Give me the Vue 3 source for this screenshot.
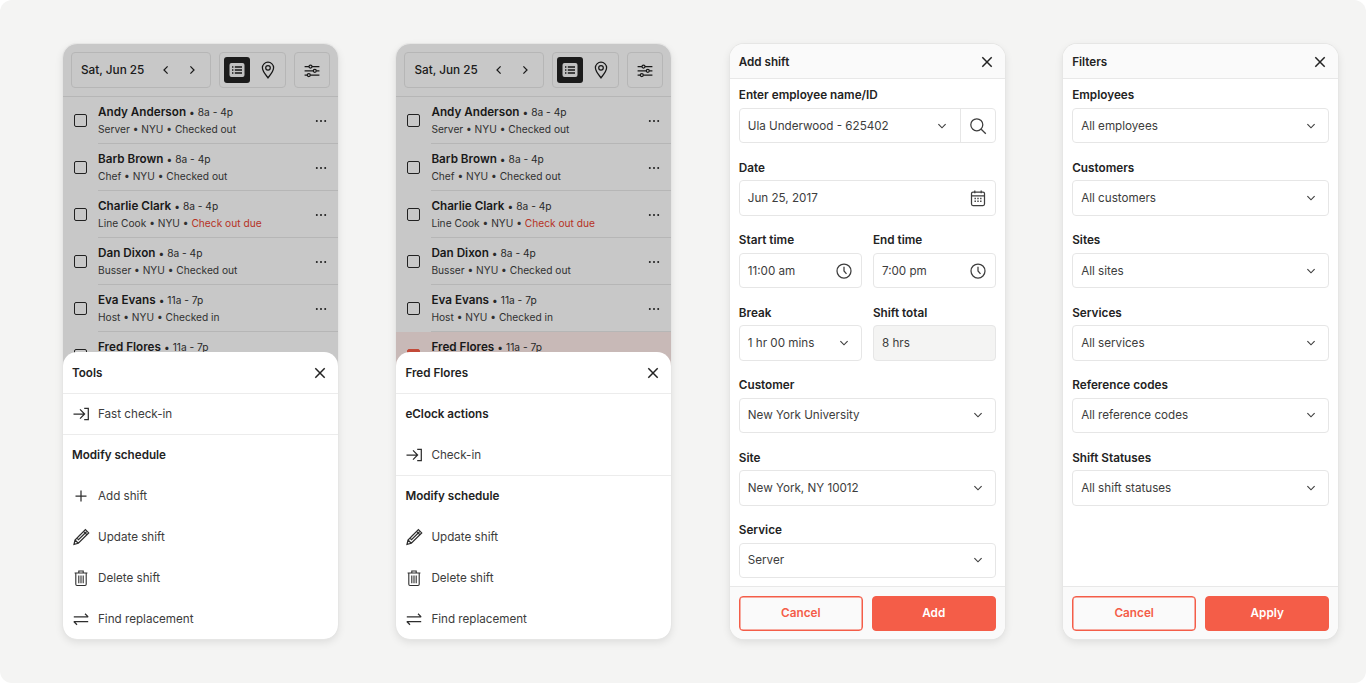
<script setup>
const rows = [
  { name: 'Andy Anderson', time: '8a - 4p', role: 'Server', status: 'Checked out' },
  { name: 'Barb Brown', time: '8a - 4p', role: 'Chef', status: 'Checked out' },
  { name: 'Charlie Clark', time: '8a - 4p', role: 'Line Cook', status: 'Check out due', due: true },
  { name: 'Dan Dixon', time: '8a - 4p', role: 'Busser', status: 'Checked out' },
  { name: 'Eva Evans', time: '11a - 7p', role: 'Host', status: 'Checked in' },
  { name: 'Fred Flores', time: '11a - 7p', last: true }
]
const phones = [
  {
    title: 'Tools',
    selected: false,
    sections: [
      { items: [{ icon: 'in', label: 'Fast check-in' }] },
      { heading: 'Modify schedule', items: [
        { icon: 'plus', label: 'Add shift' },
        { icon: 'pen', label: 'Update shift' },
        { icon: 'trash', label: 'Delete shift' },
        { icon: 'swap', label: 'Find replacement' }
      ] }
    ]
  },
  {
    title: 'Fred Flores',
    selected: true,
    sections: [
      { heading: 'eClock actions', items: [{ icon: 'in', label: 'Check-in' }] },
      { heading: 'Modify schedule', items: [
        { icon: 'pen', label: 'Update shift' },
        { icon: 'trash', label: 'Delete shift' },
        { icon: 'swap', label: 'Find replacement' }
      ] }
    ]
  }
]
const filters = [
  ['Employees', 'All employees'],
  ['Customers', 'All customers'],
  ['Sites', 'All sites'],
  ['Services', 'All services'],
  ['Reference codes', 'All reference codes'],
  ['Shift Statuses', 'All shift statuses']
]
const selects = [
  ['Customer', 'New York University'],
  ['Site', 'New York, NY 10012'],
  ['Service', 'Server']
]
</script>

<template>
  <div class="page">
    <section v-for="p in phones" :key="p.title" class="card">
      <header class="toolbar">
        <div class="box datebox">
          <span class="date">Sat, Jun 25</span>
          <svg class="ic16" viewBox="0 0 16 16"><path d="M9.6 4.4 6 8l3.6 3.6" /></svg>
          <svg class="ic16" viewBox="0 0 16 16"><path d="M6.4 4.4 10 8l-3.6 3.6" /></svg>
        </div>
        <div class="box viewbox">
          <span class="viewon">
            <svg class="listic" viewBox="0 0 16 16">
              <rect x="0.5" y="1" width="15" height="14" rx="2" fill="#f2f2f2" stroke="none" />
              <path d="M3 5h1.4M3 8h1.4M3 11h1.4M5.800 5H13M5.800 8H13M5.800 11H13" stroke="#1c1c1c" stroke-width="1.4" />
            </svg>
          </span>
          <svg class="ic20" viewBox="0 0 20 20">
            <path d="M10 17.800c-1-1.500-5.600-6.100-5.600-10a5.600 5.600 0 0 1 11.200 0c0 3.900-4.600 8.500-5.600 10Z" />
            <circle cx="10" cy="7.800" r="2.300" />
          </svg>
        </div>
        <div class="box slidebox">
          <svg class="ic20" viewBox="0 0 20 20">
            <path d="M2.600 6.500h4.400M10 6.500h7.400M2.600 10.800h8.700M14.300 10.800h3.100M2.600 15h2.700M8.300 15h9.100" />
            <circle cx="8.500" cy="6.500" r="1.500" /><circle cx="12.800" cy="10.800" r="1.500" /><circle cx="6.800" cy="15" r="1.500" />
          </svg>
        </div>
      </header>
      <div class="list">
        <div v-for="r in rows" :key="r.name" class="row" :class="{ tinted: r.last && p.selected }">
          <span class="check" :class="{ checked: r.last && p.selected }"></span>
          <div class="rowtext">
            <div class="line1"><b>{{ r.name }}</b><span class="dot">•</span>{{ r.time }}</div>
            <div v-if="!r.last" class="line2">{{ r.role }} • NYU • <span :class="{ due: r.due }">{{ r.status }}</span></div>
          </div>
          <svg v-if="!r.last" class="more" viewBox="0 0 16 16"><circle cx="3.800" cy="8" r="1" /><circle cx="8" cy="8" r="1" /><circle cx="12.200" cy="8" r="1" /></svg>
        </div>
      </div>
      <div class="scrim"></div>
      <div class="sheet">
        <div class="sheethead">
          <span>{{ p.title }}</span>
          <svg class="ic16 close" viewBox="0 0 16 16"><path d="m3.300 3.300 9.400 9.400M12.700 3.300l-9.400 9.400" /></svg>
        </div>
        <div v-for="(s, i) in p.sections" :key="i" class="group">
          <div v-if="s.heading" class="grouphead">{{ s.heading }}</div>
          <div v-for="it in s.items" :key="it.label" class="action">
            <svg class="ic20 actic" viewBox="0 0 20 20">
              <template v-if="it.icon === 'in'">
                <path d="M2.500 10h10.600M9 5.400l4.600 4.600L9 14.600M13.200 4.300h4.100v11.400h-4.100" />
              </template>
              <path v-else-if="it.icon === 'plus'" d="M10 4.500v11M4.500 10h11" />
              <template v-else-if="it.icon === 'pen'">
                <path d="M3 17.300l1-4.300L14.400 2.600l3.300 3.300L7.300 16.300 3 17.300ZM4 13l3.300 3.300M12.600 4.400l3.300 3.300M5.900 11.100 7.500 12.700l8-8M9 8l-3.100 3.100" />
              </template>
              <template v-else-if="it.icon === 'trash'">
                <path d="M3.600 5h12.800M7.800 5V3h4.400v2M4.800 5v11.300c0 .800.500 1.200 1.200 1.200h8c.700 0 1.200-.400 1.200-1.200V5M7.800 7.500v7.800M10 7.500v7.800M12.200 7.500v7.800" stroke-width="1.100" />
              </template>
              <path v-else d="M2.800 7.900h14.400M14 4.700l3.200 3.200M17.200 12.500H2.800M6 15.700l-3.200-3.200" />
            </svg>
            <span>{{ it.label }}</span>
          </div>
        </div>
      </div>
    </section>

    <section class="card form">
      <div class="formhead">
        <span>Add shift</span>
        <svg class="ic16 close" viewBox="0 0 16 16"><path d="m3.300 3.300 9.400 9.400M12.700 3.300l-9.400 9.400" /></svg>
      </div>
      <div class="formbody">
        <div class="field">
          <label>Enter employee name/ID</label>
          <div class="input split">
            <span class="grow">Ula Underwood - 625402</span>
            <svg class="chev" viewBox="0 0 16 16"><path d="m4.400 6.200 3.600 3.600 3.600-3.600" /></svg>
            <span class="searchcell">
              <svg class="ic20" viewBox="0 0 20 20"><circle cx="8.800" cy="8.800" r="6" /><path d="m13.200 13.200 4.600 4.600" /></svg>
            </span>
          </div>
        </div>
        <div class="field">
          <label>Date</label>
          <div class="input">
            <span class="grow">Jun 25, 2017</span>
            <svg class="ic20" viewBox="0 0 20 20">
              <rect x="3.500" y="4" width="13" height="13.500" rx="1.500" />
              <path d="M3.500 7.800h13M6.800 2.500V5.200M13.200 2.500V5.200" />
              <path class="dots" d="M6.500 10.500h1.400M9.300 10.500h1.400M12.100 10.500h1.400M6.500 13.200h1.400M9.300 13.200h1.400M12.100 13.200h1.400" />
            </svg>
          </div>
        </div>
        <div class="pair">
          <div class="field">
            <label>Start time</label>
            <div class="input">
              <span class="grow">11:00 am</span>
              <svg class="ic20" viewBox="0 0 20 20"><circle cx="10" cy="10" r="7" /><path d="M10 5.800V10l2.500 2.800" /></svg>
            </div>
          </div>
          <div class="field">
            <label>End time</label>
            <div class="input">
              <span class="grow">7:00 pm</span>
              <svg class="ic20" viewBox="0 0 20 20"><circle cx="10" cy="10" r="7" /><path d="M10 5.800V10l2.500 2.800" /></svg>
            </div>
          </div>
        </div>
        <div class="pair">
          <div class="field">
            <label>Break</label>
            <div class="input">
              <span class="grow">1 hr 00 mins</span>
              <svg class="chev" viewBox="0 0 16 16"><path d="m4.400 6.200 3.600 3.600 3.600-3.600" /></svg>
            </div>
          </div>
          <div class="field">
            <label>Shift total</label>
            <div class="input readonly"><span class="grow">8 hrs</span></div>
          </div>
        </div>
        <div v-for="f in selects" :key="f[0]" class="field">
          <label>{{ f[0] }}</label>
          <div class="input">
            <span class="grow">{{ f[1] }}</span>
            <svg class="chev" viewBox="0 0 16 16"><path d="m4.400 6.200 3.600 3.600 3.600-3.600" /></svg>
          </div>
        </div>
      </div>
      <div class="formfoot">
        <button class="btn ghost">Cancel</button>
        <button class="btn solid">Add</button>
      </div>
    </section>

    <section class="card form">
      <div class="formhead">
        <span>Filters</span>
        <svg class="ic16 close" viewBox="0 0 16 16"><path d="m3.300 3.300 9.400 9.400M12.700 3.300l-9.400 9.400" /></svg>
      </div>
      <div class="formbody">
        <div v-for="f in filters" :key="f[0]" class="field">
          <label>{{ f[0] }}</label>
          <div class="input">
            <span class="grow">{{ f[1] }}</span>
            <svg class="chev" viewBox="0 0 16 16"><path d="m4.400 6.200 3.600 3.600 3.600-3.600" /></svg>
          </div>
        </div>
      </div>
      <div class="formfoot">
        <button class="btn ghost">Cancel</button>
        <button class="btn solid">Apply</button>
      </div>
    </section>
  </div>
</template>

<style>
html, body { background: #ffffff; }
</style>

<style scoped>
.page {
  width: 1366px;
  height: 683px;
  box-sizing: border-box;
  padding: 44px 28px 44px 63px;
  background: #f4f4f3;
  border-radius: 12px;
  display: flex;
  gap: 58.4px;
  font-family: Inter, "Liberation Sans", sans-serif;
  color: #1f1f1f;
  overflow: hidden;
}
svg { fill: none; stroke: currentColor; stroke-width: 1.25; flex: none; display: block; }
.ic16 { width: 16px; height: 16px; }
.ic20 { width: 20px; height: 20px; }
.close { stroke-width: 1.5; }
.card {
  position: relative;
  width: 275px;
  height: 595px;
  flex: none;
  background: #fff;
  border-radius: 14px;
  overflow: hidden;
  box-shadow: 0 0 0 1px #e6e6e5, 0 3px 8px rgba(0, 0, 0, .1);
}
.toolbar {
  height: 53px;
  box-sizing: border-box;
  padding: 8px;
  display: flex;
  gap: 8px;
  background: #fafafa;
  border-bottom: 1px solid #e4e4e4;
}
.box {
  display: flex;
  align-items: center;
  box-sizing: border-box;
  height: 36px;
  border: 1px solid #e4e4e4;
  border-radius: 4px;
}
.datebox { width: 140px; padding-left: 9px; color: #232323; }
.date { font-size: 11.75px; font-weight: 500; width: 77px; }
.datebox .ic16 + .ic16 { margin-left: 10px; }
.viewbox { width: 66.5px; padding: 0 4px; gap: 7.5px; }
.viewon {
  width: 26px; height: 26px;
  background: #222;
  border-radius: 3px;
  display: flex; align-items: center; justify-content: center;
}
.listic { width: 16px; height: 16px; }
.slidebox { width: 36px; justify-content: center; }
.list { background: #fafafa; }
.row {
  height: 47px;
  display: flex;
  align-items: center;
  padding-left: 11px;
  position: relative;
}
.row::after {
  content: "";
  position: absolute;
  left: 35px; right: 0; bottom: 0;
  height: 1px;
  background: #e4e4e4;
}
.check {
  width: 13px; height: 13px;
  box-sizing: border-box;
  border: 1px solid #2a2a2a;
  border-radius: 2px;
  flex: none;
  margin-right: 11px;
}
.checked { background: #f45d48; border-color: #f45d48; }
.rowtext { flex: 1; align-self: flex-start; padding-top: 7px; }
.line1 { font-size: 10.2px; line-height: 17px; color: #333; }
.line1 b { font-size: 11.7px; font-weight: 600; color: #1f1f1f; }
.dot { margin: 0 3px; }
.line2 { font-size: 10.2px; line-height: 17px; color: #3d3d3d; }
.due { color: #e53e2e; }
.more { width: 16px; height: 16px; margin-right: 9px; fill: #222; stroke: none; }
.tinted { background: #fae8e5; }
.scrim { position: absolute; inset: 0; background: rgba(0, 0, 0, .2); }
.sheet {
  position: absolute;
  left: 0; right: 0; bottom: 0;
  height: 287px;
  background: #fff;
  border-radius: 14px 14px 0 0;
  overflow: hidden;
}
.sheethead {
  height: 42px;
  box-sizing: border-box;
  border-bottom: 1px solid #ececec;
  display: flex;
  align-items: center;
  justify-content: space-between;
  padding: 0 10px 0 9px;
  font-size: 11.65px;
  font-weight: 600;
  color: #232323;
}
.group { border-bottom: 1px solid #ececec; }
.group:last-child { border-bottom: none; }
.grouphead {
  height: 40px;
  box-sizing: border-box;
  padding: 0 0 1px 9px;
  display: flex;
  align-items: center;
  font-size: 11.65px;
  font-weight: 600;
  color: #232323;
}
.action {
  height: 41px;
  display: flex;
  align-items: center;
  padding-left: 7.5px;
  font-size: 11.65px;
  color: #3d3d3d;
}
.group .action:first-child { height: 40px; padding-bottom: 1px; box-sizing: border-box; }
.actic { margin-right: 7.5px; color: #2e2e2e; }
.form { display: flex; flex-direction: column; }
.formhead {
  height: 35px;
  flex: none;
  box-sizing: border-box;
  background: #fafafa;
  border-bottom: 1px solid #e8e8e8;
  display: flex;
  align-items: center;
  justify-content: space-between;
  padding: 1px 10px 0 9px;
  font-size: 11.65px;
  font-weight: 600;
  color: #232323;
}
.formbody {
  flex: 1;
  padding: 8.4px 9px 0;
  display: flex;
  flex-direction: column;
  gap: 16.6px;
}
.field { display: flex; flex-direction: column; min-width: 0; }
.field label {
  font-size: 11.75px;
  font-weight: 600;
  line-height: 16px;
  height: 16px;
  margin-bottom: 4.4px;
  color: #232323;
}
.pair { display: flex; gap: 11.3px; }
.pair .field { flex: 1 1 0; }
.input {
  height: 35.5px;
  box-sizing: border-box;
  border: 1px solid #e6e6e6;
  border-radius: 4px;
  display: flex;
  align-items: center;
  padding: 0 7px 0 8px;
  font-size: 11.65px;
  color: #3d3d3d;
  background: #fff;
}
.grow { flex: 1; white-space: nowrap; }
.chev { width: 16px; height: 16px; margin-right: 2px; stroke-width: 1.15; }
.dots { stroke-width: 1.4; }
.split { padding-right: 0; }
.split .chev { margin-right: 10px; }
.searchcell {
  width: 34px;
  height: 100%;
  border-left: 1px solid #e6e6e6;
  display: flex;
  align-items: center;
  justify-content: center;
}
.readonly { background: #f4f4f3; }
.formfoot {
  height: 53px;
  flex: none;
  box-sizing: border-box;
  background: #fafafa;
  border-top: 1px solid #e8e8e8;
  padding: 9px;
  display: flex;
  gap: 9px;
}
.btn {
  flex: 1;
  height: 34.5px;
  box-sizing: border-box;
  border-radius: 4px;
  font: 600 11.75px Inter, "Liberation Sans", sans-serif;
  padding: 0;
}
.ghost { background: #fafafa; border: 1px solid #f45d48; color: #f45d48; box-shadow: inset 0 0 0 .5px #f45d48; }
.solid { background: #f45d48; border: 1px solid #f45d48; color: #fff; }
</style>
